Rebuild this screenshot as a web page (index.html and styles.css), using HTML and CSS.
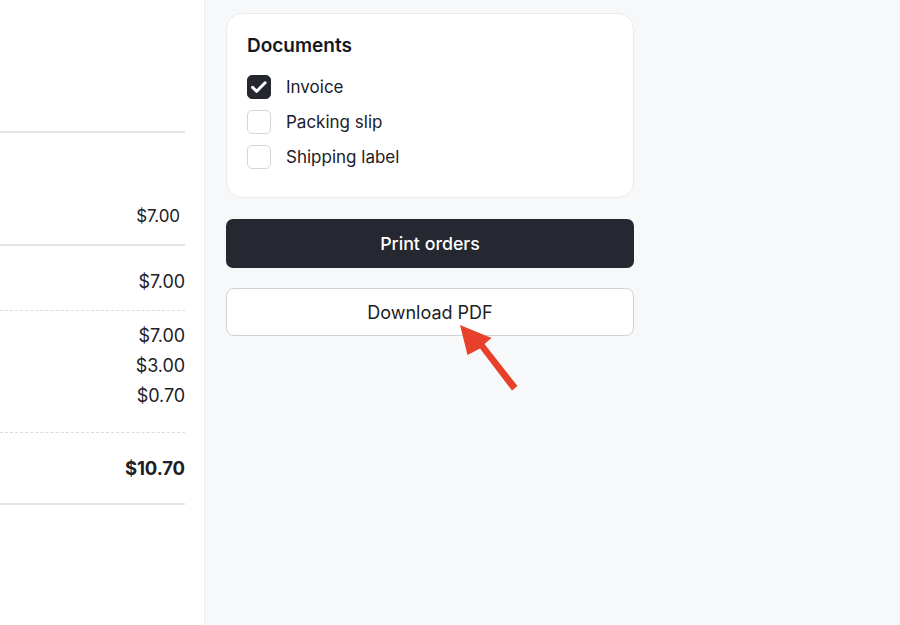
FILE: index.html
```html
<!DOCTYPE html>
<html lang="en">
<head>
<meta charset="utf-8">
<title>Print orders</title>
<link rel="stylesheet" href="styles.css">
</head>
<body>
<div class="page">
  <section class="summary">
    <div class="summary-inner">
      <div class="rule solid first"></div>
      <div class="row row-item"><span class="amt small">$7.00</span></div>
      <div class="rule solid"></div>
      <div class="row row-sub"><span class="amt">$7.00</span></div>
      <div class="rule dashed"></div>
      <div class="row-group">
        <span class="amt">$7.00</span>
        <span class="amt">$3.00</span>
        <span class="amt">$0.70</span>
      </div>
      <div class="rule dashed"></div>
      <div class="row row-total"><span class="amt bold">$10.70</span></div>
      <div class="rule solid"></div>
    </div>
  </section>
  <aside class="side">
    <div class="card">
      <h2 class="card-title">Documents</h2>
      <ul class="doc-list">
        <li class="doc">
          <span class="box checked">
            <svg viewBox="0 0 24 24" width="24" height="24"><path d="M5.6 12.4l4.1 3.9 8.4-8.5" fill="none" stroke="#fff" stroke-width="3" stroke-linecap="round" stroke-linejoin="round"/></svg>
          </span>
          <span class="doc-label">Invoice</span>
        </li>
        <li class="doc">
          <span class="box"></span>
          <span class="doc-label">Packing slip</span>
        </li>
        <li class="doc">
          <span class="box"></span>
          <span class="doc-label">Shipping label</span>
        </li>
      </ul>
    </div>
    <button class="btn btn-primary">Print orders</button>
    <button class="btn btn-secondary">Download PDF</button>
    <svg class="arrow" viewBox="0 0 70 75" width="70" height="75">
      <path d="M2 2 L33.5 15 L26.5 21 L59.5 63 L54 67.5 L22 25.5 L9.5 32 Z" fill="#e8412b"/>
    </svg>
  </aside>
</div>
</body>
</html>
```

FILE: styles.css
```css
* { box-sizing: border-box; }
html, body { margin: 0; padding: 0; }
body {
  width: 900px;
  height: 625px;
  overflow: hidden;
  font-family: Inter, "Noto Sans", "Liberation Sans", sans-serif;
  color: #1d2026;
  background: #f7f8fa;
}
.page {
  display: flex;
  height: 625px;
}
.summary {
  width: 205px;
  flex: none;
  background: #ffffff;
  border-right: 1px solid #eceef1;
}
.summary-inner {
  width: 185px;
  padding-top: 131px;
  display: flex;
  flex-direction: column;
}
.rule { height: 0; }
.rule.solid { border-top: 2px solid #e3e5e9; }
.rule.dashed { border-top: 1px dashed #d9dce1; }
.row {
  display: flex;
  justify-content: flex-end;
  align-items: flex-end;
}
.amt {
  font-size: 18px;
  line-height: 20px;
  text-align: right;
  display: block;
  letter-spacing: -0.1px;
}
.amt.small {
  font-size: 17px;
  padding-right: 5px;
}
.amt.bold {
  font-weight: 700;
  font-size: 18.5px;
}
.row-item {
  height: 111px;
  padding-bottom: 18px;
}
.row-sub {
  height: 64px;
  align-items: center;
  padding-top: 7px;
}
.row-group {
  height: 121px;
  display: flex;
  flex-direction: column;
  align-items: flex-end;
  padding-top: 15px;
  gap: 10px;
}
.row-total {
  height: 70px;
  align-items: center;
  padding-top: 0;
}
.side {
  position: relative;
  padding: 13px 0 0 21px;
  width: 429px;
  display: flex;
  flex-direction: column;
}
.card {
  background: #ffffff;
  border: 1px solid #e9ebee;
  border-radius: 16px;
  padding: 20px 20px 28px 20px;
  height: 185px;
}
.card-title {
  margin: 0;
  font-size: 19px;
  line-height: 24px;
  font-weight: 600;
  color: #16181d;
}
.doc-list {
  list-style: none;
  margin: 17px 0 0 0;
  padding: 0;
  display: flex;
  flex-direction: column;
  gap: 11px;
}
.doc {
  display: flex;
  align-items: center;
  gap: 15px;
  height: 24px;
}
.box {
  width: 24px;
  height: 24px;
  border: 1.5px solid #d3d6dc;
  border-radius: 5px;
  background: #fff;
  flex: none;
  display: flex;
  align-items: center;
  justify-content: center;
}
.box.checked {
  background: #24272e;
  border-color: #24272e;
}
.box svg { display: block; flex: none; }
.doc-label {
  font-size: 17px;
  line-height: 24px;
  color: #1d2026;
}
.btn {
  width: 408px;
  font-family: inherit;
  border-radius: 7px;
  cursor: pointer;
}
.btn-primary {
  margin-top: 21px;
  height: 49px;
  background: #252830;
  border: none;
  color: #ffffff;
  font-weight: 500;
  font-size: 17.8px;
}
.btn-secondary {
  margin-top: 20px;
  height: 48px;
  background: #ffffff;
  border: 1px solid #cfd3d9;
  border-radius: 8px;
  color: #1d2026;
  font-weight: 400;
  font-size: 18px;
}
.arrow {
  position: absolute;
  left: 253px;
  top: 323px;
}
```
